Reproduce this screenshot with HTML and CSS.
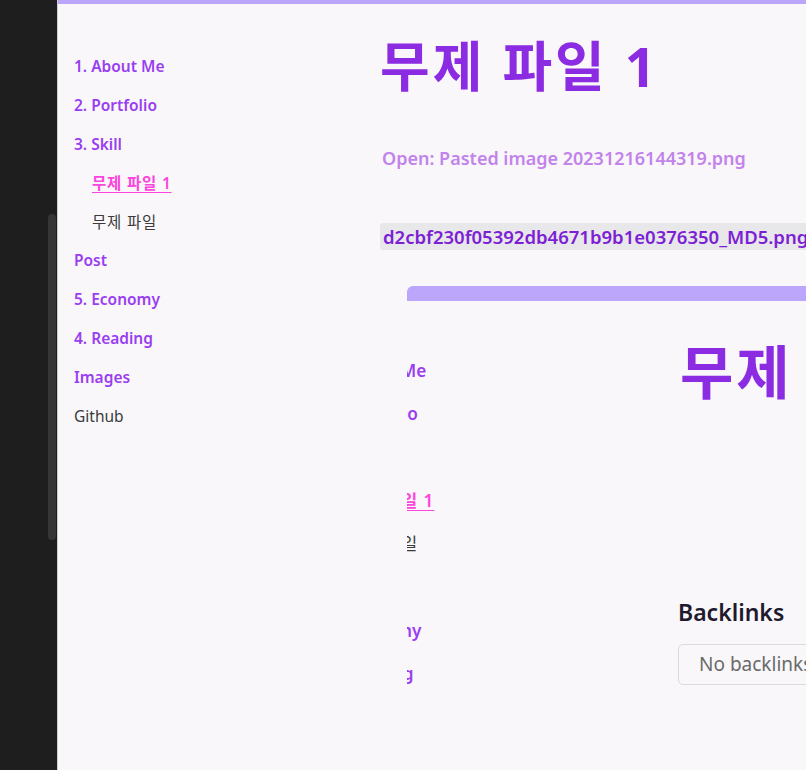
FILE: index.html
```html
<!DOCTYPE html>
<html lang="ko">
<head>
<meta charset="utf-8">
<title>무제 파일 1</title>
<link rel="stylesheet" href="styles.css">
</head>
<body>
<div class="app">
  <aside class="dock">
    <div class="thumb"></div>
  </aside>
  <div class="page">
    <nav class="sidebar">
      <ul class="nav">
        <li><a class="link">1. About Me</a></li>
        <li><a class="link">2. Portfolio</a></li>
        <li><a class="link">3. Skill</a></li>
        <li class="sub"><a class="link active ko">무제 파일 1</a></li>
        <li class="sub"><a class="plain ko">무제 파일</a></li>
        <li><a class="link">Post</a></li>
        <li><a class="link">5. Economy</a></li>
        <li><a class="link">4. Reading</a></li>
        <li><a class="link">Images</a></li>
        <li><a class="plain">Github</a></li>
      </ul>
    </nav>
    <main class="content">
      <h1 class="title">무제 파일 1</h1>
      <p class="open">Open: Pasted image 20231216144319.png</p>
      <p class="hash"><code class="code">d2cbf230f05392db4671b9b1e0376350_MD5.png</code></p>
      <div class="embed">
        <div class="embed-bar"></div>
        <div class="embed-body">
          <ul class="mini-nav">
            <li><a class="link">1. About Me</a></li>
            <li><a class="link">2. Portfolio</a></li>
            <li><a class="link">3. Skill</a></li>
            <li class="sub"><a class="link active ko">무제 파일 1</a></li>
            <li class="sub"><a class="plain ko">무제 파일</a></li>
            <li><a class="link">Post</a></li>
            <li><a class="link">5. Economy</a></li>
            <li><a class="link">4. Reading</a></li>
            <li><a class="link">Images</a></li>
            <li><a class="plain">Github</a></li>
          </ul>
          <div class="mini-main">
            <h1 class="mini-title">무제 파일 1</h1>
            <h3 class="backlinks">Backlinks</h3>
            <div class="no-back">No backlinks found</div>
          </div>
        </div>
      </div>
    </main>
  </div>
</div>
</body>
</html>
```
FILE: styles.css
```css
* { box-sizing: border-box; }
html, body {
  margin: 0;
  padding: 0;
  width: 806px;
  height: 770px;
  overflow: hidden;
  background: #f9f7f9;
  font-family: "Noto Sans", "Noto Sans CJK KR", sans-serif;
}
.app {
  display: flex;
  height: 770px;
}
.dock {
  flex: none;
  width: 58px;
  background: #1e1e1e;
  border-right: 1px solid #cfcdd0;
  padding-top: 214px;
  display: flex;
  flex-direction: column;
}
.thumb {
  width: 8px;
  height: 326px;
  margin-left: 48px;
  background: #363636;
  border-radius: 4px;
}
.page {
  flex: 1;
  min-width: 0;
  display: flex;
  border-top: 4px solid #bba6fb;
  background: #f9f7f9;
  overflow: hidden;
}
.sidebar {
  flex: none;
  width: 322px;
  padding: 50px 0 0 16px;
}
.nav, .mini-nav {
  list-style: none;
  margin: 0;
  padding: 0;
}
.nav li {
  font-size: 15.5px;
  line-height: 24px;
  margin-bottom: 14.9px;
  white-space: nowrap;
}
.sub { padding-left: 18px; }
.link {
  color: #9a3ef2;
  font-weight: 600;
  text-decoration: none;
}
.link.active {
  color: #fb45dc;
  text-decoration: underline;
  text-underline-offset: 3px;
}
.plain {
  color: #3b3b3b;
  font-weight: 400;
}
.ko { letter-spacing: 0.8px; }
.content {
  flex: 1;
  min-width: 0;
}
.title {
  margin: 30px 0 0 0;
  font-size: 54px;
  line-height: 64px;
  font-weight: 700;
  letter-spacing: 3px;
  color: #8b2be2;
  white-space: nowrap;
}
.open {
  margin: 47px 0 0 2px;
  font-size: 18px;
  line-height: 26px;
  font-weight: 600;
  color: #c283ea;
  white-space: nowrap;
}
.hash {
  margin: 54px 0 0 0;
  line-height: 23px;
  white-space: nowrap;
}
.code {
  font-family: "Noto Sans", sans-serif;
  font-size: 18.5px;
  font-weight: 600;
  color: #7d1fd4;
  background: #e8e7ea;
  padding: 1px 3px;
  border-radius: 3px;
}
.embed {
  margin: 36px 0 0 27px;
  width: 520px;
  overflow: hidden;
  border-radius: 6px 0 0 0;
}
.embed-bar {
  height: 15px;
  background: #bba6fb;
}
.embed-body {
  display: flex;
}
.mini-nav {
  flex: none;
  width: 354px;
  margin-left: -81px;
  padding: 56px 0 0 0;
}
.mini-nav li {
  font-size: 17.2px;
  line-height: 27px;
  margin-bottom: 16.3px;
  white-space: nowrap;
}
.mini-nav .sub { padding-left: 20px; }
.mini-nav .ko { letter-spacing: 0.9px; }
.mini-main {
  flex: none;
  width: 400px;
}
.mini-title {
  margin: 36px 0 0 0;
  font-size: 58px;
  line-height: 70px;
  font-weight: 700;
  letter-spacing: 3px;
  color: #8b2be2;
  white-space: nowrap;
}
.backlinks {
  margin: 190px 0 0 -2px;
  font-size: 23px;
  line-height: 30px;
  font-weight: 600;
  color: #1f1a2e;
}
.no-back {
  margin: 17px 0 0 -2px;
  height: 41px;
  border: 1px solid #dcdadd;
  border-radius: 5px;
  padding: 0 0 0 20px;
  font-size: 19px;
  line-height: 39px;
  color: #6a6a6a;
  white-space: nowrap;
}
```
